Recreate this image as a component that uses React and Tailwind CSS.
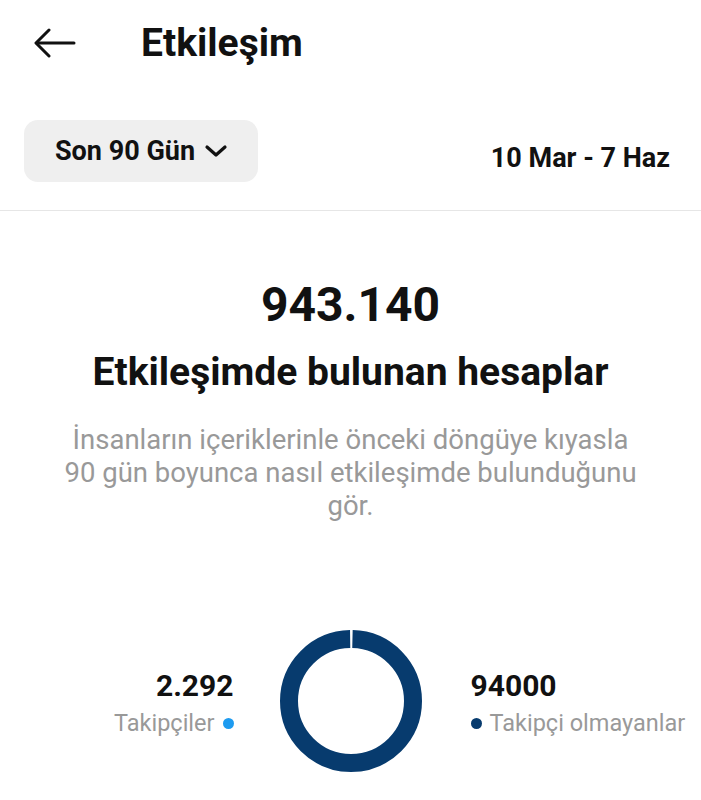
import React from "react";

export default function App() {
  const r = 62;
  const c = 2 * Math.PI * r;
  return (
    <div className="w-[701px] h-[800px] bg-white overflow-hidden" style={{ fontFamily: "Roboto, 'Liberation Sans', sans-serif" }}>
      <div className="flex items-center h-[86px] pl-[33px]">
        <svg width="44" height="30" viewBox="0 0 44 30" fill="none" stroke="#111" strokeWidth="3" strokeLinecap="round" strokeLinejoin="round">
          <path d="M41 15H4" />
          <path d="M16 2L3 15l13 13" />
        </svg>
        <h1 className="ml-[64px] text-[39px] font-bold text-[#111] leading-none">Etkileşim</h1>
      </div>
      <div className="flex items-center justify-between pl-[24px] pr-[31px] pt-[34px] pb-[28px] border-b border-[#e6e6e6]">
        <button className="flex items-center gap-[9px] h-[62px] w-[234px] rounded-[14px] bg-[#efefef] pl-[31px]">
          <span className="text-[27px] font-bold text-[#111]">Son 90 Gün</span>
          <svg width="24" height="16" viewBox="0 0 24 16" fill="none" stroke="#111" strokeWidth="3.2" strokeLinecap="round" strokeLinejoin="round">
            <path d="M3 4l9 8 9-8" />
          </svg>
        </button>
        <span className="mt-[14px] text-[27px] font-bold text-[#111]">10 Mar - 7 Haz</span>
      </div>
      <div className="flex flex-col items-center pt-[70px]">
        <div className="text-[48px] font-bold text-[#111] leading-none">943.140</div>
        <div className="mt-[24px] text-[39px] font-bold text-[#111] leading-none">Etkileşimde bulunan hesaplar</div>
        <p className="mt-[31px] w-[576px] text-center text-[27.5px] leading-[33px] text-[#999]">
          İnsanların içeriklerinle önceki döngüye kıyasla 90 gün boyunca nasıl etkileşimde bulunduğunu gör.
        </p>
      </div>
      <div className="mt-[107px] grid grid-cols-[1fr_142px_1fr] items-center">
        <div className="flex flex-col items-end pr-[46px] pt-[4px]">
          <div className="text-[30px] font-bold text-[#111] leading-none">2.292</div>
          <div className="mt-[11px] flex items-center gap-[8px] text-[23.5px] text-[#999] leading-none">
            <span>Takipçiler</span>
            <span className="w-[11px] h-[11px] rounded-full bg-[#1d9bf0]" />
          </div>
        </div>
        <svg width="142" height="144" viewBox="0 0 142 144">
          <circle cx="71" cy="72" r={r} fill="none" stroke="#073b6e" strokeWidth="18" strokeDasharray={`${c - 3} 3`} strokeDashoffset={-1.5} transform="rotate(-90 71 72)" />
        </svg>
        <div className="flex flex-col items-start pl-[49px] pt-[4px]">
          <div className="text-[30px] font-bold text-[#111] leading-none">94000</div>
          <div className="mt-[11px] flex items-center gap-[8px] text-[23.5px] text-[#999] leading-none">
            <span className="w-[11px] h-[11px] rounded-full bg-[#073b6e]" />
            <span>Takipçi olmayanlar</span>
          </div>
        </div>
      </div>
    </div>
  );
}
